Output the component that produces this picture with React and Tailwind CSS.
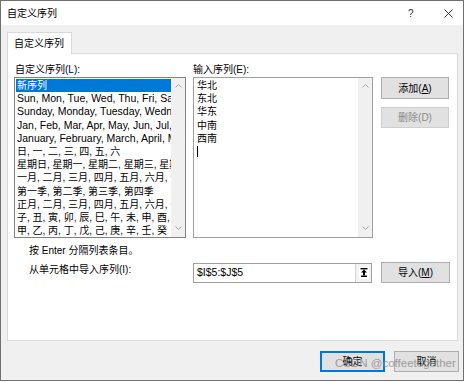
import React from "react";

const listItems = [
  "Sun, Mon, Tue, Wed, Thu, Fri, Sat",
  "Sunday, Monday, Tuesday, Wednesday, Thursday",
  "Jan, Feb, Mar, Apr, May, Jun, Jul, Aug",
  "January, February, March, April, May",
  "日, 一, 二, 三, 四, 五, 六",
  "星期日, 星期一, 星期二, 星期三, 星期四",
  "一月, 二月, 三月, 四月, 五月, 六月, 七月",
  "第一季, 第二季, 第三季, 第四季",
  "正月, 二月, 三月, 四月, 五月, 六月, 七月",
  "子, 丑, 寅, 卯, 辰, 巳, 午, 未, 申, 酉, 戌, 亥",
  "甲, 乙, 丙, 丁, 戊, 己, 庚, 辛, 壬, 癸",
];

const entries = ["华北", "东北", "华东", "中南", "西南"];

function Chevron({ up }) {
  return (
    <svg width="7" height="4" viewBox="0 0 7 4" className="block">
      <polyline
        points={up ? "0.5,3.5 3.5,0.5 6.5,3.5" : "0.5,0.5 3.5,3.5 6.5,0.5"}
        fill="none"
        stroke="#a6a6a6"
        strokeWidth="1"
      />
    </svg>
  );
}

function ScrollBar() {
  return (
    <div className="w-[14px] h-full bg-[#f0f0f0] flex flex-col items-center justify-between pt-[6px] pb-[7px]">
      <Chevron up />
      <Chevron />
    </div>
  );
}

export default function App() {
  return (
    <div
      className="w-[466px] h-[382px] bg-white relative overflow-hidden text-[10px] text-black"
      style={{ fontFamily: '"Liberation Sans", "Noto Sans CJK SC", sans-serif' }}
    >
      <div className="w-[464px] h-[381px] border border-[#707070] flex flex-col bg-[#f0f0f0]">
        {/* title bar */}
        <div className="h-[24px] bg-white flex items-center pl-[6px] shrink-0">
          <span className="text-[10px]">自定义序列</span>
          <span className="ml-[351px] text-[10px] text-[#333]">?</span>
          <svg width="9" height="9" viewBox="0 0 9 9" className="ml-[30px]">
            <line x1="0.5" y1="0.5" x2="8.5" y2="8.5" stroke="#222" strokeWidth="0.9" />
            <line x1="8.5" y1="0.5" x2="0.5" y2="8.5" stroke="#222" strokeWidth="0.9" />
          </svg>
        </div>

        {/* body */}
        <div className="flex flex-col pl-[6px] pt-[7px]">
          <div className="relative z-10 w-[65px] h-[22px] bg-white border border-b-0 border-[#d9d9d9] -mb-px flex items-center pl-[6px]">
            自定义序列
          </div>
          <div className="w-[451px] h-[288px] bg-white border border-[#d9d9d9] pl-[6px] pt-[9px]">
            <div className="flex">
              {/* left column */}
              <div className="w-[172px] flex flex-col">
                <div className="h-[14px] leading-[14px] pl-[1px]">自定义序列(L):</div>
                <div className="h-[161px] border border-[#828282] flex">
                  <div className="flex-1 overflow-hidden pt-[1px] pl-[1px]">
                    <div className="h-[13.2px] leading-[13.2px] bg-[#0078d7] text-white pl-[1px] whitespace-nowrap">
                      新序列
                    </div>
                    {listItems.map((t, i) => (
                      <div
                        key={i}
                        className={
                          i < 4
                            ? "h-[13.2px] leading-[13.2px] pl-[1px] whitespace-nowrap overflow-hidden text-[10.5px]"
                            : "h-[13.2px] leading-[13.2px] pl-[1px] whitespace-nowrap overflow-hidden"
                        }
                      >
                        {t}
                      </div>
                    ))}
                  </div>
                  <ScrollBar />
                </div>
              </div>

              {/* middle column */}
              <div className="w-[180px] ml-[7px] flex flex-col">
                <div className="h-[14px] leading-[14px]">输入序列(E):</div>
                <div className="h-[161px] border border-[#a0a0a0] flex">
                  <div className="flex-1 pt-[1px] pl-[3px]">
                    {entries.map((t) => (
                      <div key={t} className="h-[13.2px] leading-[13.2px]">
                        {t}
                      </div>
                    ))}
                    <div className="h-[13.2px] flex items-center">
                      <div className="w-px h-[11px] bg-black" />
                    </div>
                  </div>
                  <ScrollBar />
                </div>
              </div>

              {/* buttons column */}
              <div className="ml-[8px] pt-[14px] flex flex-col gap-[8px]">
                <div className="w-[68px] h-[22px] bg-[#e1e1e1] border border-[#adadad] flex items-center justify-center">
                  添加(<span className="underline">A</span>)
                </div>
                <div className="w-[68px] h-[21px] bg-[#e1e1e1] border border-[#cfcfcf] flex items-center justify-center text-[#8a8a8a]">
                  删除(D)
                </div>
              </div>
            </div>

            <div className="pl-[15px] mt-[6px] h-[13px] leading-[13px]">按 Enter 分隔列表条目。</div>

            <div className="flex items-center mt-[5px]">
              <div className="w-[179px] pl-[15px] -mt-[6px]">从单元格中导入序列(I):</div>
              <div className="w-[179px] h-[20px] border border-[#a0a0a0] flex items-stretch">
                <div className="flex-1 pl-[3px] flex items-center text-[10.5px]">$I$5:$J$5</div>
                <div className="w-[16px] border-l border-[#d4d4d4] bg-[#f3f3f3] flex items-center justify-center">
                  <div className="w-[10px] h-[12px] bg-white flex items-center justify-center">
                    <svg width="8" height="9" viewBox="0 0 8 9">
                      <rect x="0.5" y="0" width="7" height="1.4" fill="#000" />
                      <polygon points="4,1.5 7,4.5 5,4.5 5,7.5 3,7.5 3,4.5 1,4.5" fill="#000" />
                      <rect x="1" y="7.5" width="6" height="1.5" fill="#000" />
                    </svg>
                  </div>
                </div>
              </div>
              <div className="ml-[9px] w-[69px] h-[21px] bg-[#e1e1e1] border border-[#adadad] flex items-center justify-center">
                导入(<span className="underline">M</span>)
              </div>
            </div>
          </div>

          {/* bottom buttons */}
          <div className="flex justify-end pr-[4px] mt-[10px] gap-[9px]">
            <div className="w-[65px] h-[21px] bg-[#e1e1e1] border-2 border-[#0078d7] flex items-center justify-center">
              确定
            </div>
            <div className="w-[65px] h-[21px] bg-[#e1e1e1] border border-[#adadad] flex items-center justify-center">
              取消
            </div>
          </div>
        </div>
      </div>

      <div
        className="absolute left-[335px] top-[355px] text-[11.5px] text-[#8c8c8c] opacity-80 whitespace-nowrap pointer-events-none"
        style={{ fontFamily: '"Liberation Sans", sans-serif' }}
      >
        CSDN @coffeetogether
      </div>
    </div>
  );
}
